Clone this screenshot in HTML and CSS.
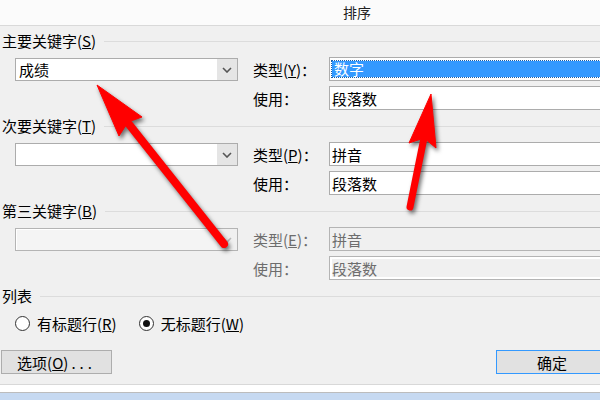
FILE: index.html
```html
<!DOCTYPE html>
<html lang="zh-CN">
<head>
  <meta charset="utf-8">
  <title>排序</title>
  <link rel="stylesheet" href="styles.css">
</head>
<body>

  <div class="dialog">
    <div class="titlebar">排序</div>

    <div class="content">

      <section class="key">
        <div class="legend"><span>主要关键字(<u>S</u>)</span></div>
        <div class="keyRow">
          <div class="combo">
            <span class="comboText">成绩</span>
            <span class="comboBtn"><svg width="10" height="6" viewBox="0 0 10 6"><polyline points="1,1 5,5 9,1" fill="none" stroke="#555" stroke-width="1.6"/></svg></span>
          </div>
          <div class="fields">
            <div class="field">
              <label>类型(<u>Y</u>)：</label>
              <div class="box"><span class="selected">数字</span></div>
            </div>
            <div class="field">
              <label>使用：</label>
              <div class="box">段落数</div>
            </div>
          </div>
        </div>
      </section>

      <section class="key">
        <div class="legend"><span>次要关键字(<u>T</u>)</span></div>
        <div class="keyRow">
          <div class="combo">
            <span class="comboText"></span>
            <span class="comboBtn"><svg width="10" height="6" viewBox="0 0 10 6"><polyline points="1,1 5,5 9,1" fill="none" stroke="#555" stroke-width="1.6"/></svg></span>
          </div>
          <div class="fields">
            <div class="field">
              <label>类型(<u>P</u>)：</label>
              <div class="box">拼音</div>
            </div>
            <div class="field">
              <label>使用：</label>
              <div class="box">段落数</div>
            </div>
          </div>
        </div>
      </section>

      <section class="key disabled">
        <div class="legend"><span>第三关键字(<u>B</u>)</span></div>
        <div class="keyRow">
          <div class="combo">
            <span class="comboText"></span>
            <span class="comboBtn"><svg width="10" height="6" viewBox="0 0 10 6"><polyline points="1,1 5,5 9,1" fill="none" stroke="#bbb" stroke-width="1.6"/></svg></span>
          </div>
          <div class="fields">
            <div class="field">
              <label>类型(<u>E</u>)：</label>
              <div class="box">拼音</div>
            </div>
            <div class="field">
              <label>使用：</label>
              <div class="box inset">段落数</div>
            </div>
          </div>
        </div>
      </section>

      <section class="list">
        <div class="legend"><span>列表</span></div>
        <div class="radios">
          <span class="radio"><span class="dot"></span><span>有标题行(<u>R</u>)</span></span>
          <span class="radio checked"><span class="dot"></span><span>无标题行(<u>W</u>)</span></span>
        </div>
      </section>

      <div class="buttons">
        <button type="button" class="btn">选项(<u>O</u>)<span class="dots">...</span></button>
        <button type="button" class="btn default">确定</button>
      </div>
    </div>

    <div class="dialogEdge"></div>

    <!-- two red callout arrows drawn on top of the dialog -->
    <svg class="arrows" width="600" height="400" viewBox="0 0 600 400">
      <g fill="#ff0000" stroke="#ff0000">
        <line x1="128" y1="123" x2="224" y2="244" stroke-width="8" stroke-linecap="round"/>
        <polygon points="97,85 142,117 128,122 119,136" stroke-width="1" stroke-linejoin="round"/>
        <line x1="424" y1="138" x2="410" y2="207" stroke-width="7" stroke-linecap="round"/>
        <polygon points="431,94 436,148 424,138 409,143" stroke-width="1" stroke-linejoin="round"/>
      </g>
    </svg>
  </div>

</body>
</html>
```

FILE: styles.css
```css
body {
  margin: 0;
  width: 600px;
  height: 400px;
  overflow: hidden;
  background: #c6d9f1;
  font-family: "Noto Sans CJK SC", "DejaVu Sans", sans-serif;
  font-size: 15px;
  color: #000;
}

.dialog {
  position: relative;
  width: 714px;
  background: #f0f0f0;
}

.titlebar {
  height: 25px;
  line-height: 24px;
  text-align: center;
  font-size: 14px;
  color: #222;
  background: #fbfbfb;
  border-bottom: 1px solid #d9d9d9;
}

.content {
  padding: 7px 0 10px 0;
}

.legend {
  display: flex;
  align-items: center;
  gap: 8px;
  height: 16px;
  line-height: 16px;
  padding-left: 2px;
}

.legend::after {
  content: "";
  flex: 1;
  height: 1px;
  background: #dcdcdc;
}

.key {
  height: 85px;
}

.keyRow {
  display: flex;
  align-items: flex-start;
  padding-left: 15px;
  margin-top: 8px;
}

.combo {
  display: flex;
  width: 223px;
  height: 23px;
  margin-top: 1px;
  box-sizing: border-box;
  border: 1px solid #acacac;
  background: #fff;
}

.comboText {
  flex: 1;
  padding-left: 3px;
  line-height: 21px;
}

.comboBtn {
  width: 20px;
  display: flex;
  align-items: center;
  justify-content: center;
  background: #e5e5e5;
}

.fields {
  display: flex;
  flex-direction: column;
  gap: 5px;
  margin-left: 15px;
}

.field {
  display: flex;
  align-items: center;
}

.field label {
  width: 76px;
}

.box {
  display: flex;
  align-items: center;
  width: 370px;
  height: 24px;
  box-sizing: border-box;
  padding: 0 2px;
  border: 1px solid #acacac;
  background: #fff;
}

.selected {
  flex: 1;
  height: 16px;
  line-height: 16px;
  padding-left: 2px;
  color: #fff;
  background: #3399ff;
  outline: 1px dotted #1a5fa8;
}

/* third key is greyed out, its heading stays black */
.disabled .fields {
  color: #6d6d6d;
}

.disabled .combo {
  border-color: #b4b4b4;
  background: #f4f4f4;
  box-shadow: inset 0 1px 0 #fff, inset 1px 0 0 #fff;
}

.disabled .comboBtn {
  background: #f0f0f0;
}

.disabled .box {
  border-color: #b4b4b4;
  background: #f0f0f0;
}

.disabled .box.inset {
  box-shadow: inset 0 0 0 2px #fff;
}

.radios {
  display: flex;
  gap: 22px;
  height: 16px;
  margin-top: 11px;
  padding-left: 15px;
}

.radio {
  display: flex;
  align-items: center;
  gap: 7px;
}

.dot {
  position: relative;
  width: 15px;
  height: 15px;
  box-sizing: border-box;
  border: 1px solid #333;
  border-radius: 50%;
  background: #fff;
}

.checked .dot::after {
  content: "";
  position: absolute;
  left: 3px;
  top: 3px;
  width: 7px;
  height: 7px;
  border-radius: 50%;
  background: #111;
}

.buttons {
  display: flex;
  justify-content: space-between;
  margin-top: 19px;
  padding: 0 106px 0 1px;
}

.btn {
  width: 111px;
  height: 24px;
  padding: 0;
  font-family: inherit;
  font-size: 15px;
  color: #000;
  background: #e1e1e1;
  border: 1px solid #adadad;
}

.dots {
  letter-spacing: 4px;
  margin-left: 3px;
}

.btn.default {
  width: 112px;
  border-color: #3399ff;
}

.dialogEdge {
  height: 7px;
  background: #fff;
  border-top: 1px solid #d8d8d8;
  border-bottom: 1px solid #bcbcbc;
}

.arrows {
  position: absolute;
  left: 0;
  top: 0;
  pointer-events: none;
  filter: drop-shadow(2px 3px 2px rgba(0, 0, 0, 0.55));
}
```
